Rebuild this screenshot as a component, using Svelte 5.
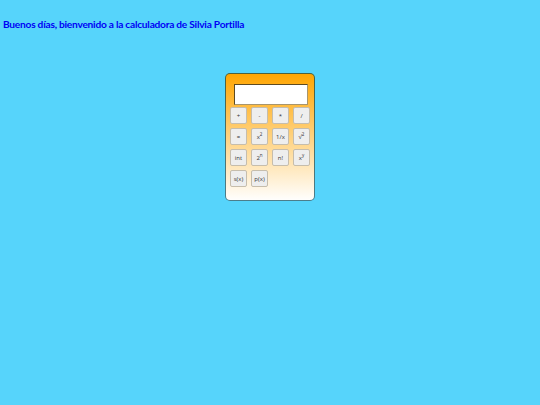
<script>
  const rows = [
    [{ t: '+' }, { t: '-' }, { t: '*' }, { t: '/' }],
    [{ t: '=' }, { t: 'x', s: '2' }, { t: '1/x' }, { t: '√', s: '2' }],
    [{ t: 'int' }, { t: '2', s: 'n' }, { t: 'n!' }, { t: 'x', s: 'y' }],
    [{ t: 's(x)' }, { t: 'p(x)' }]
  ];
</script>

<main class="page">
  <h1 class="greeting">Buenos días, bienvenido a la calculadora de Silvia Portilla</h1>
  <div class="calc">
    <input class="display" type="text" aria-label="Pantalla" />
    <div class="keys">
      {#each rows as row}
        {#each row as k}
          <button class="key">{k.t}{#if k.s}<sup>{k.s}</sup>{/if}</button>
        {/each}
      {/each}
    </div>
  </div>
</main>

<style>
  :global(body) {
    margin: 0;
    background: #56d4fb;
  }
  .page {
    height: 405px;
    overflow: hidden;
    font-family: Lato, "Open Sans", sans-serif;
  }
  .greeting {
    margin: 0;
    padding: 18px 0 0 3px;
    height: 73px;
    box-sizing: border-box;
    font-size: 10.2px;
    letter-spacing: -0.25px;
    line-height: 12px;
    font-weight: 700;
    color: #0000f5;
  }
  .calc {
    box-sizing: border-box;
    width: 90px;
    height: 128px;
    margin-left: 225px;
    padding: 10px 4px 0 4px;
    border: 1px solid rgba(0, 70, 90, 0.7);
    border-radius: 5px;
    background: linear-gradient(to bottom, #ffa500, #ffffff) border-box;
  }
  .display {
    display: block;
    box-sizing: border-box;
    width: 74px;
    height: 21px;
    margin: 0 0 2px 4px;
    padding: 0;
    background: #fff;
    border: 1px solid;
    border-color: #5e4a20 #a8956c #a8956c #5e4a20;
  }
  .keys {
    display: grid;
    grid-template-columns: repeat(4, 17px);
    grid-auto-rows: 17px;
    gap: 4px;
  }
  .key {
    box-sizing: border-box;
    padding: 0;
    background: #eeeeee;
    border: 1.5px solid #c6bdac;
    border-radius: 2px;
    font-family: "Open Sans", sans-serif;
    font-size: 6px;
    font-weight: 400;
    line-height: 1;
    color: #333;
  }
  sup {
    font-size: 4.5px;
    line-height: 0;
  }
</style>
